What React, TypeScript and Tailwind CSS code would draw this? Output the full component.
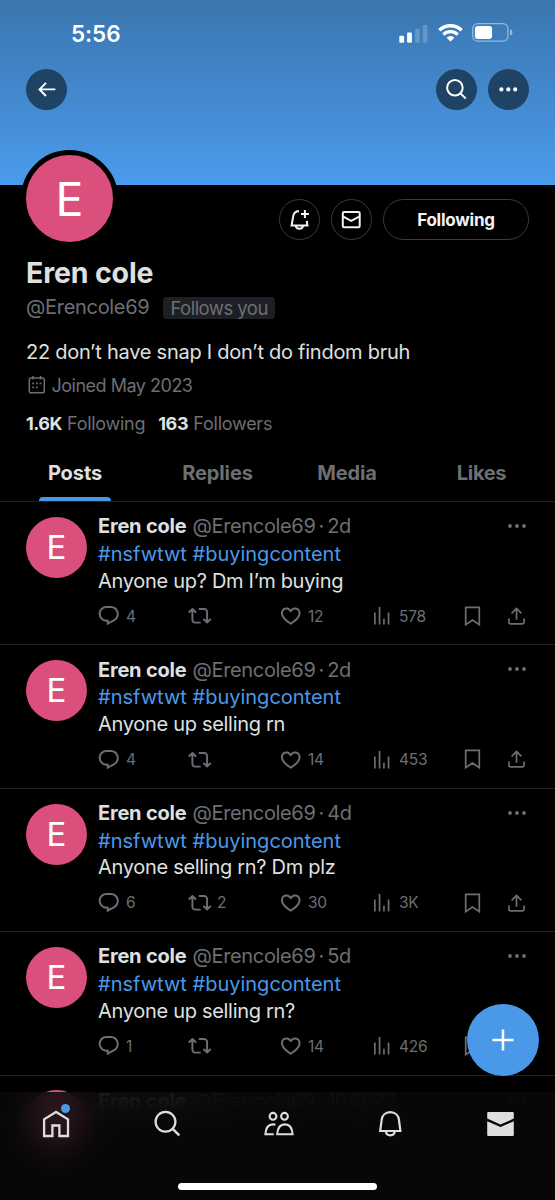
import type { ReactNode } from "react";

type Post = {
  text: string;
  age: string;
  replies: string;
  reposts?: string;
  likes: string;
  views: string;
};

const posts: Post[] = [
  { text: "Anyone up? Dm I’m buying", age: "2d", replies: "4", likes: "12", views: "578" },
  { text: "Anyone up selling rn", age: "2d", replies: "4", likes: "14", views: "453" },
  { text: "Anyone selling rn? Dm plz", age: "4d", replies: "6", reposts: "2", likes: "30", views: "3K" },
  { text: "Anyone up selling rn?", age: "5d", replies: "1", likes: "14", views: "426" },
];

function Svg({ w = 24, h = 24, className = "", children }: { w?: number; h?: number; className?: string; children: ReactNode }) {
  return (
    <svg width={w} height={h} viewBox={`0 0 ${w} ${h}`} fill="none" stroke="currentColor" strokeWidth="2" className={`shrink-0 ${className}`}>
      {children}
    </svg>
  );
}

function Glyph({ d }: { d: string }) {
  return (
    <svg viewBox="0 0 24 24" fill="currentColor" className="size-[23.5px] shrink-0">
      <path d={d} />
    </svg>
  );
}

const replyPath =
  "M1.751 10c0-4.42 3.584-8 8.005-8h4.366c4.49 0 8.129 3.64 8.129 8.13 0 2.96-1.607 5.68-4.196 7.11l-8.054 4.46v-3.69h-.067c-4.49.1-8.183-3.51-8.183-8.01zm8.005-6c-3.317 0-6.005 2.69-6.005 6 0 3.37 2.77 6.08 6.138 6.01l.351-.01h1.761v2.3l5.087-2.81c1.951-1.08 3.163-3.13 3.163-5.36 0-3.39-2.744-6.13-6.129-6.13H9.756z";
const repostPath =
  "M4.5 3.88l4.432 4.14-1.364 1.46L5.5 7.55V16c0 1.1.896 2 2 2H13v2H7.5c-2.209 0-4-1.79-4-4V7.55L1.432 9.48.068 8.02 4.5 3.88zM16.5 6H11V4h5.5c2.209 0 4 1.79 4 4v8.45l2.068-1.93 1.364 1.46-4.432 4.14-4.432-4.14 1.364-1.46 2.068 1.93V8c0-1.1-.896-2-2-2z";
const likePath =
  "M16.697 5.5c-1.222-.06-2.679.51-3.89 2.16l-.805 1.09-.806-1.09C9.984 6.01 8.526 5.44 7.304 5.5c-1.243.07-2.349.78-2.91 1.91-.552 1.12-.633 2.78.479 4.82 1.074 1.97 3.257 4.27 7.129 6.61 3.87-2.34 6.052-4.64 7.126-6.61 1.111-2.04 1.03-3.7.477-4.82-.561-1.13-1.666-1.84-2.908-1.91zm4.187 7.69c-1.351 2.48-4.001 5.12-8.379 7.67l-.503.3-.504-.3c-4.379-2.55-7.029-5.19-8.382-7.67-1.36-2.5-1.41-4.86-.514-6.67.887-1.79 2.647-2.91 4.601-3.01 1.651-.09 3.368.56 4.798 2.01 1.429-1.45 3.146-2.1 4.796-2.01 1.954.1 3.714 1.22 4.601 3.01.896 1.81.846 4.17-.514 6.67z";
const viewsPath = "M8.9 21V3h1.7v18H8.9zM18.1 21V8.7h1.7V21h-1.7zM4.1 21V8.7h1.7V21H4.1zm9.3 0v-6h1.7v6h-1.7z";

function StatusBar() {
  return (
    <div className="flex h-[67px] items-center justify-between pr-[42px] pl-[71px] text-white">
      <span className="text-[22.5px] font-semibold tracking-[-0.1px]">5:56</span>
      <div className="flex items-center gap-[9.5px]">
        <Svg w={29} h={18} className="mt-px">
          <g fill="currentColor" stroke="none">
            <rect x="0.3" y="10.8" width="4.8" height="7" rx="1.3" />
            <rect x="8.1" y="7.5" width="4.8" height="10.3" rx="1.3" />
            <rect x="15.9" y="3.8" width="4.8" height="14" rx="1.3" opacity=".2" />
            <rect x="23.7" y="0" width="4.8" height="17.8" rx="1.3" opacity=".2" />
          </g>
        </Svg>
        <Svg w={25} h={19} className="-mt-[3px]">
          <path d="M1.4 7.2a15.9 15.9 0 0 1 22.2 0" strokeWidth="3.5" />
          <path d="M5.4 11.6a10.2 10.2 0 0 1 14.2 0" strokeWidth="3.2" />
          <path d="M12.5 18.4 8.6 14.7a5.6 5.6 0 0 1 7.8 0z" fill="currentColor" stroke="none" />
        </Svg>
        <Svg w={41} h={19} className="-mt-[2px]">
          <rect x=".7" y=".7" width="35.3" height="17.4" rx="5" strokeWidth="1.3" opacity=".45" />
          <rect x="2.9" y="2.9" width="17.2" height="13" rx="3" fill="currentColor" stroke="none" />
          <path d="M38.2 6.3c1.5.5 2.2 1.7 2.2 3.1s-.7 2.6-2.2 3.1z" fill="currentColor" stroke="none" opacity=".5" />
        </Svg>
      </div>
    </div>
  );
}

function RoundButton({ children }: { children: ReactNode }) {
  return <button className="flex size-[41px] items-center justify-center rounded-full bg-[#1f4364] pr-px pb-px text-white">{children}</button>;
}

function Banner() {
  return (
    <header className="h-[185px] bg-linear-to-b from-[#3a76af] to-[#4b9bec]">
      <StatusBar />
      <div className="mt-[2px] flex items-center gap-[11px] px-[26px]">
        <RoundButton>
          <Svg>
            <path d="M21.3 12.4H5.7M12 5.8l-6.5 6.6L12 19" strokeWidth="1.9" />
          </Svg>
        </RoundButton>
        <div className="flex-1" />
        <RoundButton>
          <Svg>
            <circle cx="10.9" cy="10.8" r="7.8" />
            <path d="m16.5 16.4 5.2 5.1" />
          </Svg>
        </RoundButton>
        <RoundButton>
          <Svg>
            <g fill="currentColor" stroke="none">
              <circle cx="5.4" cy="12.4" r="2.1" />
              <circle cx="12.3" cy="12.4" r="2.1" />
              <circle cx="19.2" cy="12.4" r="2.1" />
            </g>
          </Svg>
        </RoundButton>
      </div>
    </header>
  );
}

function Profile() {
  return (
    <section className="px-[26px] text-[#dfe0e1]">
      <div className="flex h-[62px] items-start">
        <div className="-mt-[35px] -ml-[5px] flex size-[97px] shrink-0 items-center justify-center rounded-full border-[5px] border-black bg-[#db4f7c] pt-[2px] text-[46.5px] text-white">
          E
        </div>
        <div className="ml-auto flex gap-[11px] pt-[14px] text-[#f2f3f3]">
          <button className="flex size-[41px] items-center justify-center rounded-full border border-[#3a3c3f] pr-px pb-px">
            <Svg>
              <path d="M12 4.1C8.2 4.3 6.3 7.2 6 10.4L4.6 18.5h15.8l-.6-4.7M8.7 18.7c.6 4.1 6.8 4.1 7.4 0M17.9 3.1v7.8M14 7h7.8" />
            </Svg>
          </button>
          <button className="flex size-[41px] items-center justify-center rounded-full border border-[#3a3c3f] pr-px pb-px">
            <Svg>
              <rect x="3.8" y="4.9" width="16.9" height="15.4" rx="1.3" />
              <path d="m3.8 9.3 8.4 4.5 8.5-4.5" />
            </Svg>
          </button>
          <button className="h-[41px] w-[146px] rounded-full border border-[#3a3c3f] pt-[2px] text-[17px] font-bold tracking-[-0.22px]">Following</button>
        </div>
      </div>
      <h1 className="mt-2 h-9 text-[28.5px] leading-9 font-bold tracking-[-0.15px]">Eren cole</h1>
      <div className="mt-[5px] flex h-6 items-center gap-[14px] text-[#6c6f73]">
        <span className="pb-[3px] text-[20px] leading-6 tracking-[-0.3px]">@Erencole69</span>
        <span className="h-[22.5px] rounded bg-[#1d1f24] px-[7px] text-[18.5px] leading-[22.5px] tracking-[-0.53px]">Follows you</span>
      </div>
      <p className="mt-[19px] h-[26px] text-[20px] leading-[26px] tracking-[-0.26px]">22 don’t have snap I don’t do findom bruh</p>
      <div className="mt-[8px] flex h-6 items-center text-[18px] tracking-[-0.49px] text-[#6c6f73]">
        <Svg w={18} h={18} className="mr-[5.5px] ml-0.5">
          <rect x="1.3" y="1.9" width="15" height="14.8" rx="1.8" strokeWidth="1.5" />
          <path d="M5 0v3.4M12.6 0v3.4" strokeWidth="1.5" />
          <path d="M7.9 7.3h1.8M11.6 7.3h1.8M4.3 7.3h1.8M4.3 11.4h1.8M7.9 11.4h1.8" strokeWidth="1.7" />
        </Svg>
        Joined May 2023
      </div>
      <div className="mt-[14px] mb-px flex h-6 items-center text-[18px]">
        <b className="tracking-[-0.47px]">1.6K</b>
        <span className="ml-[5px] tracking-[-0.28px] text-[#6c6f73]">Following</span>
        <b className="ml-[13px] tracking-[-0.3px]">163</b>
        <span className="ml-[5px] tracking-[-0.25px] text-[#6c6f73]">Followers</span>
      </div>
    </section>
  );
}

function Tabs() {
  return (
    <nav className="grid h-[65px] grid-cols-[150px_135px_124px_145px] text-center text-[20px] leading-6 font-bold tracking-[-0.1px] text-[#6c6f73]">
      <div className="flex flex-col items-center justify-between pt-[25px] text-[#dfe0e1]">
        <span>Posts</span>
        <span className="h-1 w-[72px] rounded-t-sm bg-[#4a99e9]" />
      </div>
      <span className="pt-[25px]">Replies</span>
      <span className="pt-[25px]">Media</span>
      <span className="pt-[25px] tracking-[-0.3px]">Likes</span>
    </nav>
  );
}

function Action({ d, count }: { d: string; count?: string }) {
  return (
    <div className="flex w-[91px] items-center gap-[5.5px]">
      <Glyph d={d} />
      <span className="pt-px">{count}</span>
    </div>
  );
}

function Avatar() {
  return <div className="flex size-[61px] shrink-0 items-center justify-center rounded-full bg-[#db4f7c] text-[33px] text-white">E</div>;
}

function Byline({ age }: { age: string }) {
  return (
    <div className="flex items-center">
      <b className="tracking-[-0.2px]">Eren cole</b>
      <span className="ml-[6px] tracking-[-0.34px] text-[#6c6f73]">@Erencole69</span>
      <span className="ml-[3px] text-[#6c6f73]">·</span>
      <span className="ml-[3px] tracking-[-0.4px] text-[#6c6f73]">{age}</span>
      <Svg w={18} h={4} className="mr-[3.5px] mb-0.5 ml-auto text-[#6c6f73]">
        <g fill="currentColor" stroke="none">
          <circle cx="2" cy="2" r="1.9" />
          <circle cx="9" cy="2" r="1.9" />
          <circle cx="16" cy="2" r="1.9" />
        </g>
      </Svg>
    </div>
  );
}

function PostRow({ post }: { post: Post }) {
  return (
    <article className="flex h-[143.4px] border-t border-[#1e1f21] px-[26px] pt-[15px]">
      <Avatar />
      <div className="-mt-[3.9px] ml-[11px] flex-1 text-[20px] leading-[27.3px] text-[#dfe0e1]">
        <Byline age={post.age} />
        <p className="pt-[0.5px] text-[#4a99e9]">#nsfwtwt #buyingcontent</p>
        <p className="-mt-[0.5px] tracking-[-0.3px]">{post.text}</p>
        <div className="mt-[9px] -ml-px flex h-6 items-center text-[15.5px] leading-6 tracking-[-0.25px] text-[#6c6f73]">
          <Action d={replyPath} count={post.replies} />
          <Action d={repostPath} count={post.reposts} />
          <Action d={likePath} count={post.likes} />
          <Action d={viewsPath} count={post.views} />
          <Svg>
            <path d="M4.7 3.4h13.6v17.3L11.5 16l-6.8 4.7z" strokeWidth="1.7" />
          </Svg>
          <Svg className="ml-5">
            <path d="M3.9 14.4v3.9c0 .9.6 1.5 1.5 1.5h12.2c.9 0 1.5-.6 1.5-1.5v-3.9M11.5 15.8V4.9M6.6 9.3l4.9-4.8 4.9 4.8" strokeWidth="1.7" />
          </Svg>
        </div>
      </div>
    </article>
  );
}

function BottomNav() {
  return (
    <nav className="absolute inset-x-0 bottom-0 h-[108px] bg-[#080809]/85 text-[#dedede] backdrop-blur-[14px]">
      <div className="grid h-[64px] grid-cols-5 place-items-center">
        <div className="relative">
          <Svg w={30} h={30}>
            <path d="M15 2.9 3.1 10.3V27H11.4V16.5h7V27H27V10.3z" strokeWidth="2.3" />
          </Svg>
          <span className="absolute -top-[5px] right-px size-[8.5px] rounded-full bg-[#4a99e9]" />
        </div>
        <Svg w={30} h={30}>
          <circle cx="13.5" cy="12.7" r="9.9" strokeWidth="2.2" />
          <path d="m20.4 19.6 6.9 6.8" strokeWidth="2.4" />
        </Svg>
        <Svg w={34} h={30} className="ml-0.5">
          <g strokeWidth="2.1">
            <circle cx="11" cy="7.3" r="3.4" />
            <circle cx="22.5" cy="7.3" r="3.4" />
            <path d="M15.2 25.3c.4-6.7 3.2-9.9 7.7-9.9s7.3 3.2 7.7 9.9zM11.8 25.3H3.4c.4-6.7 3-9.9 7.4-9.9 1 0 1.8.1 2.6.4" />
          </g>
        </Svg>
        <Svg w={30} h={30} className="ml-0.5">
          <path d="M15.3 3.2c-5 0-8.3 3.3-8.7 8L5.2 22h20.2L24 11.2c-.4-4.7-3.7-8-8.7-8z" strokeWidth="2.2" />
          <path d="M10.8 22.4c.8 5.3 8.2 5.3 9 0" strokeWidth="2.2" />
        </Svg>
        <Svg w={30} h={30} className="ml-0.5">
          <g fill="currentColor" stroke="none">
            <path d="M2.5 3h24c.8 0 1.3.5 1.3 1.3v5.3L14.5 15.5 1.2 9.6V4.3C1.2 3.5 1.7 3 2.5 3z" />
            <path d="m1.2 12.2 13.3 5.9 13.3-5.9v13.5c0 .8-.5 1.3-1.3 1.3h-24c-.8 0-1.3-.5-1.3-1.3z" />
          </g>
        </Svg>
      </div>
      <div className="mx-auto mt-[27px] h-[6.5px] w-[199px] rounded-full bg-white" />
    </nav>
  );
}

export default function App() {
  return (
    <div className="relative h-[1200px] w-[555px] overflow-hidden bg-black font-['Inter',sans-serif]">
      <Banner />
      <Profile />
      <Tabs />
      <main>
        {posts.map((post, i) => (
          <PostRow key={i} post={post} />
        ))}
        <article className="flex border-t border-[#1e1f21] px-[26px] pt-[14px]">
          <Avatar />
          <div className="-mt-[2px] ml-[11px] flex-1 text-[20px] leading-[27.3px] text-[#dfe0e1]">
            <Byline age="10/8/23" />
          </div>
        </article>
      </main>
      <button className="absolute right-4 bottom-[124px] flex size-[72px] items-center justify-center rounded-full bg-[#4a99e9] text-white">
        <Svg>
          <path d="M12 1.5v21M1.5 12h21" strokeWidth="2.5" />
        </Svg>
      </button>
      <BottomNav />
    </div>
  );
}
